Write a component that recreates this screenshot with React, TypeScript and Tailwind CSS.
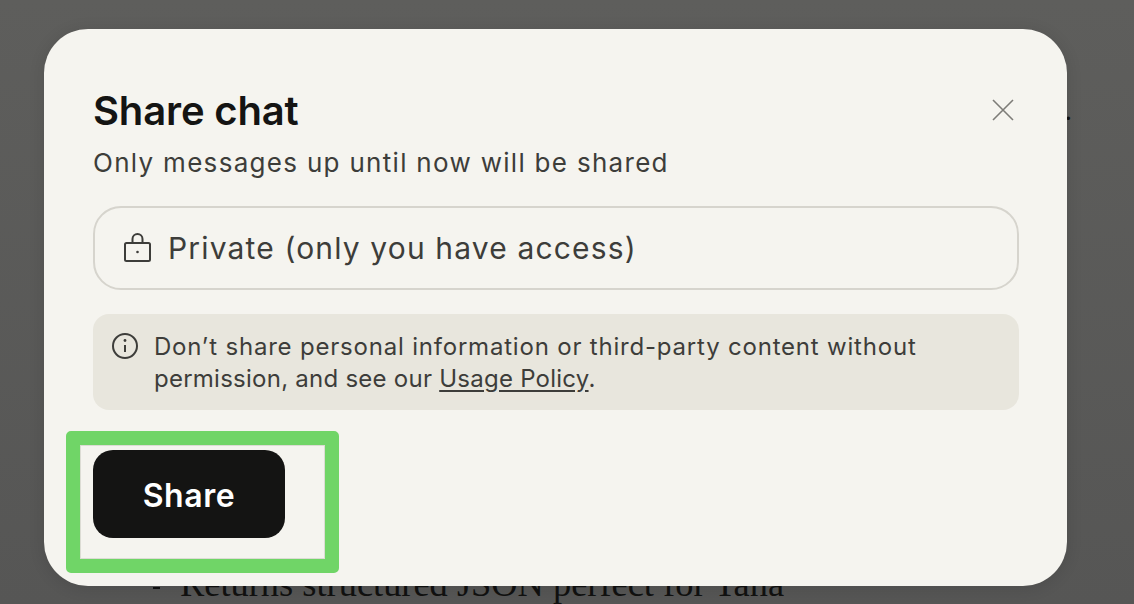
import React from "react";

const sans = "font-['Inter','Noto_Sans',sans-serif]";

export default function App() {
  return (
    <div className="relative h-[604px] w-[1134px] overflow-hidden bg-gradient-to-b from-[#5e5e5c] to-[#565655]">
      {/* page content dimmed behind the dialog */}
      <div className="flex h-full flex-col font-['Liberation_Serif',serif] text-[#111110]">
        <div className="flex justify-end pr-[62px] pt-[92px] text-[30px] leading-[36px]">.</div>
        <div className="mt-auto flex items-center gap-[20px] pb-[3px] pl-[153px] text-[36.4px] leading-[34px]">
          <span className="mt-[7px] h-[2px] w-[7px] bg-[#111110]" />
          <span>Returns structured JSON perfect for Tana</span>
        </div>
      </div>

      {/* dialog */}
      <div className={`absolute left-[44px] top-[29px] flex h-[557px] w-[1023px] flex-col rounded-[44px] bg-[#f5f4ef] pl-[49px] pr-[48px] pt-[56px] shadow-[0_2px_16px_rgba(0,0,0,0.12)] ${sans}`}>
        <div className="flex items-start justify-between">
          <div className="text-[40px] font-semibold leading-[52px] tracking-[-0.15px] text-[#141413]">Share chat</div>
          <svg className="mr-[4px] mt-[13px]" width="24" height="24" viewBox="0 0 24 24" fill="none" stroke="#7d7c78" strokeWidth="1.6">
            <path d="M2 2L22 22M22 2L2 22" />
          </svg>
        </div>
        <div className="mt-[8px] text-[26px] leading-[36px] tracking-[1.3px] text-[#3d3d3a]">Only messages up until now will be shared</div>

        <div className="mt-[25px] flex h-[84px] items-center gap-[15px] rounded-[28px] border-2 border-[#d6d4cd] pl-[28px]">
          <svg width="30" height="32" viewBox="0 0 30 32" fill="none" stroke="#3d3d3a" strokeWidth="2">
            <rect x="2" y="11" width="25" height="18" rx="1.5" />
            <path d="M9.5 11V7a5 5 0 0 1 10 0V11" />
            <circle cx="14.5" cy="20" r="1.3" fill="#3d3d3a" stroke="none" />
          </svg>
          <span className="text-[30px] leading-[40px] tracking-[1.15px] text-[#3d3d3a]">Private (only you have access)</span>
        </div>

        <div className="mt-[24px] flex h-[96px] gap-[15px] rounded-[16px] bg-[#e8e6dd] pl-[18px] pt-[17px]">
          <svg className="mt-[1px] shrink-0" width="28" height="28" viewBox="0 0 28 28" fill="none" stroke="#3d3d3a" strokeWidth="2">
            <circle cx="14" cy="14" r="12" />
            <path d="M14 13v7" />
            <circle cx="14" cy="8.5" r="1.4" fill="#3d3d3a" stroke="none" />
          </svg>
          <div className="text-[24px] leading-[32px] tracking-[0.8px] text-[#3d3d3a]">
            Don’t share personal information or third-party content without
            <br />
            <span className="tracking-[0.25px]">
              permission, and see our <span className="underline underline-offset-[3px]">Usage Policy</span>.
            </span>
          </div>
        </div>

        <div className="mt-[40px] flex h-[88px] w-[192px] items-center justify-center rounded-[20px] bg-[#141413] pt-[3px] text-[32px] font-semibold tracking-[0.6px] text-white">
          Share
        </div>
      </div>

      {/* highlight annotation */}
      <div className="absolute left-[66px] top-[431px] h-[142px] w-[273px] rounded-[5px] border-[14px] border-[#70d567]">
        <div className="h-full w-full border border-[#dcdcd4]" />
      </div>
    </div>
  );
}
